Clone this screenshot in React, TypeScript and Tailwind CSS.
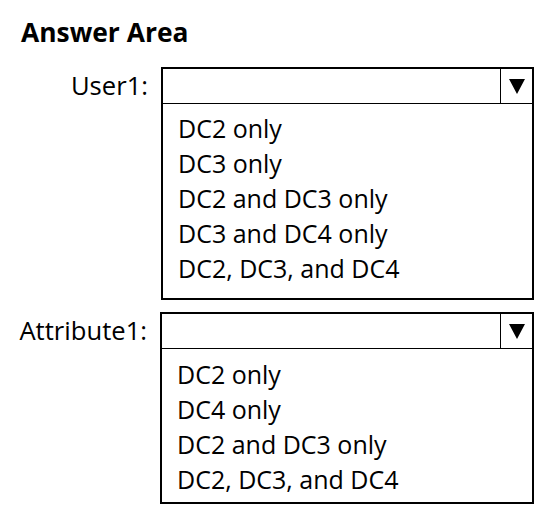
import React from "react";

function Arrow() {
  return (
    <svg width="16" height="15" viewBox="0 0 16 15">
      <polygon points="0,0 16,0 8,15" fill="#000" />
    </svg>
  );
}

function DropBox({ items, className, listClass }: { items: string[]; className: string; listClass: string }) {
  return (
    <div className={"border-2 border-black bg-white " + className}>
      <div className="flex h-[35px] border-b border-black">
        <div className="flex-1" />
        <div className="flex w-[32px] items-center justify-center border-l border-black">
          <Arrow />
        </div>
      </div>
      <div className={listClass}>
        {items.map((t) => (
          <div key={t} className="h-[35px] leading-[35px] whitespace-nowrap">
            {t}
          </div>
        ))}
      </div>
    </div>
  );
}

export default function App() {
  return (
    <div className="w-[546px] h-[521px] bg-white text-black font-['Open_Sans','Noto_Sans',sans-serif]">
      <div className="pl-[21px] pt-[14px] h-[67px]">
        <h1 className="text-[26.4px] font-bold leading-[36px]">Answer Area</h1>
      </div>
      <div className="flex">
        <div className="w-[150px] h-[37px] flex items-center justify-end text-[25.6px] pt-[1px] pr-[2px]">User1:</div>
        <DropBox
          className="ml-[11px] w-[373px]"
          listClass="pl-[15px] pt-[7px] pb-[12px] text-[25px]"
          items={["DC2 only", "DC3 only", "DC2 and DC3 only", "DC3 and DC4 only", "DC2, DC3, and DC4"]}
        />
      </div>
      <div className="flex mt-[12px]">
        <div className="w-[150px] h-[37px] flex items-center justify-end text-[25.6px] pt-[1px] pr-[3px]">Attribute1:</div>
        <DropBox
          className="ml-[10px] w-[374px]"
          listClass="pl-[15px] pt-[8px] pb-[5px] text-[25px]"
          items={["DC2 only", "DC4 only", "DC2 and DC3 only", "DC2, DC3, and DC4"]}
        />
      </div>
    </div>
  );
}
